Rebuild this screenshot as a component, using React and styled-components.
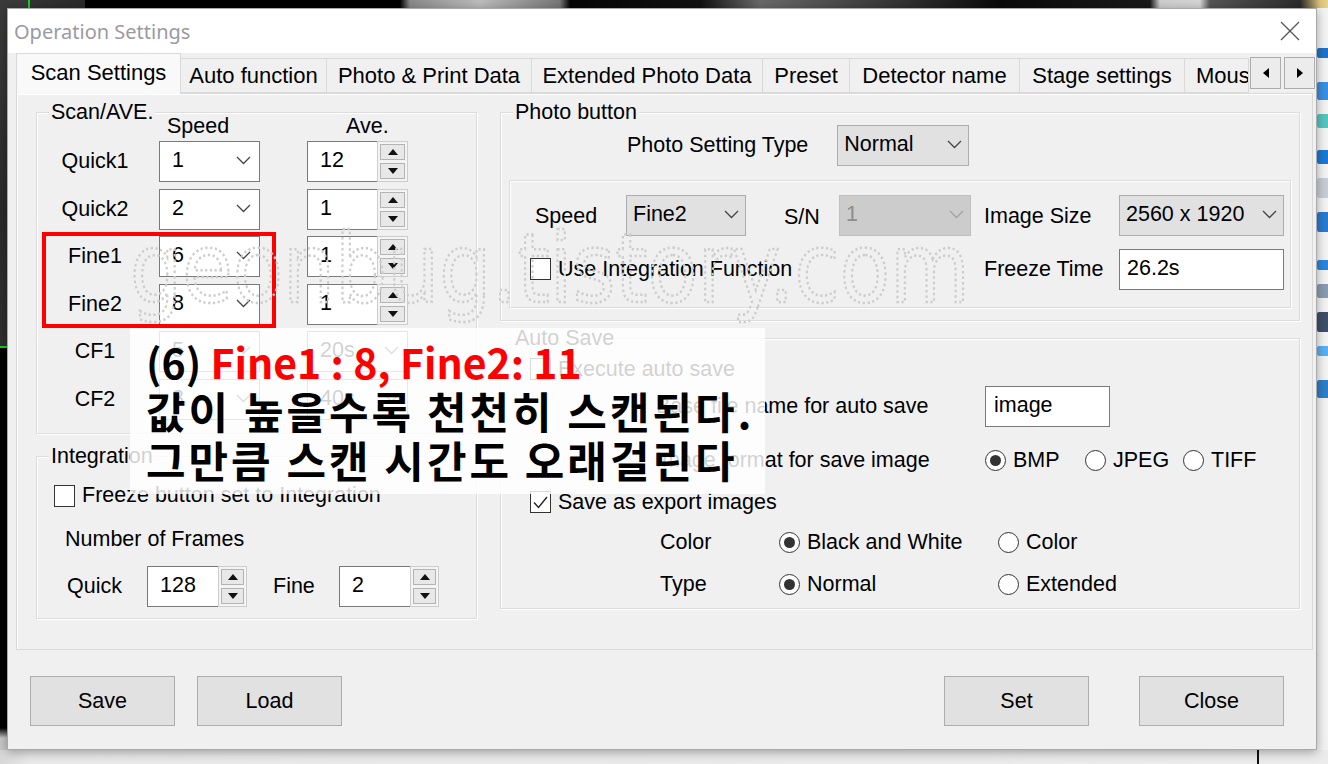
import React from "react";
import styled, { createGlobalStyle } from "styled-components";

const GlobalStyle = createGlobalStyle`
  html, body {
    margin: 0;
    padding: 0;
  }
  body {
    width: 1328px;
    height: 764px;
    overflow: hidden;
    font-family: "Liberation Sans", Arial, sans-serif;
  }
`;

const Desktop = styled.div`
  position: relative;
  width: 1328px;
  height: 764px;
  display: grid;
  grid-template-columns: 7px 1310px 1fr;
  grid-template-rows: 8px 742px 1fr;
  background: #141414;
  overflow: hidden;
`;

const TopStrip = styled.div`
  grid-column: 1 / -1;
  grid-row: 1;
  background: linear-gradient(
    to right,
    #3a3a3a 0, #3a3a3a 28px, #19d219 28px, #19d219 30px, #333 30px, #2a2a2a 85px,
    #000 85px, #000 400px, #8a8a8a 410px, #bdbdbd 480px, #777 560px,
    #050505 570px, #111 700px, #6a6a6a 760px, #333 900px, #0a0a0a 1000px,
    #1a1a1a 1150px, #cfcfcf 1160px, #d6d6d6 1200px, #555 1210px, #2b2b2b 1300px,
    #d9c27a 1320px, #e8d38a 1328px
  );
`;

const LeftStrip = styled.div`
  grid-column: 1;
  grid-row: 2;
  background: linear-gradient(
    to bottom,
    #3b3b3b 0, #2a2a2a 200px, #303030 338px, #19d219 338px, #19d219 340px,
    #000 340px, #000 720px, #c8c8c8 730px
  );
`;

const RightStrip = styled.div`
  grid-column: 3;
  grid-row: 2;
  background: #f4f4f4;
  display: flex;
  flex-direction: column;
  gap: 14px;
  padding-top: 40px;
  overflow: hidden;
`;

const BottomStrip = styled.div`
  grid-column: 1 / -1;
  grid-row: 3;
  background: linear-gradient(to right, #d8d8d8 0, #e9e9e9 30px, #ececec 1257px, #111 1257px, #111 1259px, #ececec 1259px);
`;

const Dialog = styled.div`
  grid-column: 2;
  grid-row: 2;
  position: relative;
  z-index: 1;
  display: flex;
  flex-direction: column;
  background: #f0f0f0;
  border: 1px solid #a9a9a9;
  box-shadow: 0 2px 10px rgba(0, 0, 0, 0.35);
`;

const TitleBar = styled.div`
  height: 44px;
  flex: none;
  background: #fff;
  display: flex;
  align-items: center;
  justify-content: space-between;
  padding: 0 16px 0 6px;
`;

const Title = styled.div`
  font-family: "Noto Sans", "Open Sans", sans-serif;
  font-size: 20px;
  color: #9a9a9f;
`;

const TabsRow = styled.div`
  height: 40px;
  flex: none;
  display: flex;
  align-items: flex-end;
  padding: 0 3px 0 9px;
`;

const Tab = styled.div`
  box-sizing: border-box;
  flex: none;
  width: ${(p) => p.$w}px;
  height: ${(p) => (p.$active ? 41 : 35)}px;
  margin-bottom: ${(p) => (p.$active ? -1 : 0)}px;
  margin-left: -1px;
  border: 1px solid #d9d9d9;
  border-bottom: ${(p) => (p.$active ? "none" : "1px solid #d9d9d9")};
  background: ${(p) => (p.$active ? "#f9f9f9" : "#f0f0f0")};
  display: flex;
  align-items: center;
  justify-content: ${(p) => (p.$clip ? "flex-start" : "center")};
  padding: ${(p) => (p.$clip ? "0 0 0 11px" : "0")};
  padding-bottom: ${(p) => (p.$active ? 3 : 0)}px;
  font-size: 22px;
  color: #000;
  white-space: nowrap;
  overflow: hidden;
  position: relative;
  z-index: ${(p) => (p.$active ? 2 : 1)};
`;

const TabScroll = styled.div`
  display: flex;
  gap: 3px;
  margin-bottom: 4px;
  margin-left: 1px;
`;

const ScrollBtn = styled.div`
  box-sizing: border-box;
  width: 31px;
  height: 32px;
  border: 1px solid #adadad;
  background: #ececec;
  display: flex;
  align-items: center;
  justify-content: center;
`;

const TabPage = styled.div`
  box-sizing: border-box;
  height: 557px;
  flex: none;
  margin: 0 3px 0 8px;
  border: 1px solid #d9d9d9;
  box-shadow: inset 1px 1px 0 #fff;
  background: #f0f0f0;
  display: grid;
  grid-template-columns: 441px 800px;
  column-gap: 23px;
  align-content: start;
  padding: 18px 0 0 19px;
`;

const Column = styled.div`
  display: flex;
  flex-direction: column;
  gap: ${(p) => p.$gap}px;
`;

const Group = styled.div`
  box-sizing: border-box;
  position: relative;
  height: ${(p) => p.$h}px;
  border: 1px solid #dcdcdc;
  box-shadow: inset 1px 1px 0 #fff, 1px 1px 0 #fff;
  padding: ${(p) => p.$pad};
  font-size: 21.5px;
  color: #000;
`;

const Legend = styled.div`
  position: absolute;
  top: -13px;
  left: 12px;
  padding: 0 2px;
  line-height: 24px;
  font-size: 21.5px;
  background: #f0f0f0;
`;

/* ---- scan / ave grid ---- */
const ScanGrid = styled.div`
  display: grid;
  grid-template-columns: 99px 148px 101px;
  grid-template-rows: 20px;
  grid-auto-rows: 40px;
  row-gap: 7.5px;
  align-items: center;
`;

const ColHead = styled.div`
  height: 20px;
  line-height: 24px;
  padding-left: ${(p) => p.$indent}px;
  white-space: nowrap;
`;

const RowLabel = styled.div`
  width: 70px;
  text-align: center;
  white-space: nowrap;
`;

/* ---- combo ---- */
const comboColors = {
  white: { bg: "#fff", border: "#7a7a7a", text: "#000", chev: "#444" },
  flat: { bg: "#e1e1e1", border: "#adadad", text: "#000", chev: "#444" },
  disabled: { bg: "#cccccc", border: "#bfbfbf", text: "#8d8d8d", chev: "#a3a3a3" },
};

const ComboBox = styled.div`
  box-sizing: border-box;
  width: ${(p) => p.$w}px;
  height: ${(p) => p.$h}px;
  display: flex;
  align-items: center;
  justify-content: space-between;
  padding: 0 ${(p) => p.$padR}px 2px ${(p) => p.$padL}px;
  background: ${(p) => comboColors[p.$kind].bg};
  border: 1px solid ${(p) => comboColors[p.$kind].border};
  color: ${(p) => comboColors[p.$kind].text};
  font-size: 21.5px;
  white-space: nowrap;
`;

const Combo = ({ value, w = 101, h = 41, kind = "white", padL, padR }) => (
  <ComboBox
    $w={w}
    $h={h}
    $kind={kind}
    $padL={padL ?? (kind === "white" ? 12 : 6)}
    $padR={padR ?? (kind === "white" ? 8 : 6)}
  >
    <span>{value}</span>
    <svg width="15" height="9" viewBox="0 0 15 9">
      <polyline
        points="1,1 7.5,7.5 14,1"
        fill="none"
        stroke={comboColors[kind].chev}
        strokeWidth="1.3"
      />
    </svg>
  </ComboBox>
);

/* ---- spin ---- */
const SpinBox = styled.div`
  display: flex;
  height: 41px;
`;

const SpinField = styled.div`
  box-sizing: border-box;
  width: ${(p) => p.$w}px;
  height: 41px;
  background: #fff;
  border: 1px solid #7a7a7a;
  border-right: none;
  display: flex;
  align-items: center;
  padding: 0 0 2px ${(p) => p.$padL}px;
  font-size: 21.5px;
`;

const SpinButtons = styled.div`
  box-sizing: border-box;
  width: ${(p) => p.$w}px;
  height: 41px;
  border: 1px solid #cdcdcd;
  background: #f4f4f4;
  padding: 2px;
  display: flex;
  flex-direction: column;
  gap: 3px;
`;

const SpinBtn = styled.div`
  flex: 1;
  border: 1px solid #b4b4b4;
  background: #e8e8e8;
  display: flex;
  align-items: center;
  justify-content: center;
`;

const Tri = styled.div`
  width: 0;
  height: 0;
  border-left: 5px solid transparent;
  border-right: 5px solid transparent;
  ${(p) => (p.$up ? "border-bottom: 6px solid #111;" : "border-top: 6px solid #111;")}
`;

const Spin = ({ value, w = 70, bw = 31, padL = 12 }) => (
  <SpinBox>
    <SpinField $w={w} $padL={padL}>{value}</SpinField>
    <SpinButtons $w={bw}>
      <SpinBtn><Tri $up /></SpinBtn>
      <SpinBtn><Tri /></SpinBtn>
    </SpinButtons>
  </SpinBox>
);

/* ---- checkbox / radio ---- */
const Check = styled.div`
  display: flex;
  align-items: center;
  gap: 7px;
  margin-left: ${(p) => p.$ml || 0}px;
  white-space: nowrap;
`;

const CheckBoxSq = styled.div`
  box-sizing: border-box;
  width: 21px;
  height: 22px;
  flex: none;
  border: 1px solid #333;
  background: #fff;
  display: flex;
  align-items: center;
  justify-content: center;
`;

const CheckItem = ({ label, checked, ml }) => (
  <Check $ml={ml}>
    <CheckBoxSq>
      {checked && (
        <svg width="17" height="15" viewBox="0 0 17 15">
          <polyline points="2,7.5 6.5,12.5 15,2" fill="none" stroke="#222" strokeWidth="1.4" />
        </svg>
      )}
    </CheckBoxSq>
    <span>{label}</span>
  </Check>
);

const RadioWrap = styled.div`
  display: flex;
  align-items: center;
  gap: 7px;
  width: ${(p) => (p.$w ? `${p.$w}px` : "auto")};
  flex: none;
  white-space: nowrap;
`;

const RadioDot = styled.div`
  box-sizing: border-box;
  width: 21px;
  height: 21px;
  flex: none;
  border-radius: 50%;
  border: 1px solid #333;
  background: #fff;
  display: flex;
  align-items: center;
  justify-content: center;
  &::after {
    content: "";
    width: 11px;
    height: 11px;
    border-radius: 50%;
    background: ${(p) => (p.$on ? "#333" : "transparent")};
  }
`;

const Radio = ({ label, on, w }) => (
  <RadioWrap $w={w}>
    <RadioDot $on={on} />
    <span>{label}</span>
  </RadioWrap>
);

const TextField = styled.div`
  box-sizing: border-box;
  width: ${(p) => p.$w}px;
  height: 41px;
  background: #fff;
  border: 1px solid #7a7a7a;
  display: flex;
  align-items: center;
  padding: 0 0 2px ${(p) => p.$padL || 7}px;
  font-size: 21.5px;
`;

/* ---- integration group ---- */
const FramesTitle = styled.div`
  margin: 20px 0 0 11px;
  line-height: 22px;
`;

const FramesRow = styled.div`
  display: flex;
  align-items: center;
  margin-top: 16px;
  padding-left: 13px;
`;

const FieldLabel = styled.span`
  width: ${(p) => p.$w}px;
  margin-left: ${(p) => p.$ml || 0}px;
  flex: none;
  white-space: nowrap;
`;

/* ---- photo group ---- */
const PhotoTypeRow = styled.div`
  display: flex;
  align-items: center;
  gap: 29px;
  padding-left: 118px;
`;

const InnerPanel = styled.div`
  box-sizing: border-box;
  margin-top: 14px;
  height: 128px;
  border: 1px solid #dcdcdc;
  box-shadow: inset 1px 1px 0 #fff, 1px 1px 0 #fff;
  padding: 14px 0 0 25px;
  display: grid;
  grid-template-columns: 91px 120px 38px 55px 132px 13px 135px 165px;
  grid-template-rows: 41px 40px;
  row-gap: 13px;
  align-items: center;
`;

const Cell = styled.div`
  grid-column: ${(p) => p.$col};
  white-space: nowrap;
  padding-top: ${(p) => p.$pt || 0}px;
`;

/* ---- auto save group ---- */
const SaveRow = styled.div`
  display: flex;
  align-items: center;
  height: ${(p) => p.$h}px;
  margin-top: ${(p) => p.$mt}px;
  padding-left: ${(p) => p.$indent || 0}px;
`;

/* ---- bottom buttons ---- */
const ButtonBar = styled.div`
  flex: 1;
  display: flex;
  align-items: flex-start;
  padding: 26px 32px 0 22px;
`;

const PushButton = styled.div`
  box-sizing: border-box;
  width: 145px;
  height: 50px;
  margin-left: ${(p) => p.$ml || 0}px;
  background: #e1e1e1;
  border: 1px solid #adadad;
  display: flex;
  align-items: center;
  justify-content: center;
  font-size: 21.5px;
  color: #000;
`;

const Spacer = styled.div`
  flex: 1;
`;

/* ---- overlays ---- */
const Highlight = styled.div`
  position: absolute;
  left: 42px;
  top: 232px;
  width: 234px;
  height: 96px;
  box-sizing: border-box;
  border: 4px solid #ff0000;
  z-index: 3;
`;

const Watermark = styled.svg`
  position: absolute;
  left: 124px;
  top: 214px;
  z-index: 3;
  pointer-events: none;
`;

const Note = styled.div`
  position: absolute;
  left: 130px;
  top: 328px;
  width: 635px;
  height: 166px;
  box-sizing: border-box;
  padding: 9px 0 0 16px;
  background: rgba(255, 255, 255, 0.82);
  font-family: "Noto Sans CJK KR", "Noto Sans", sans-serif;
  font-weight: 700;
  line-height: 49px;
  color: #000;
  white-space: nowrap;
  z-index: 4;
`;

const NoteLine = styled.div`
  font-size: ${(p) => p.$size}px;
  letter-spacing: ${(p) => p.$ls || 0}px;
`;

const Red = styled.span`
  color: #ff0000;
`;

const DeskIcon = styled.div`
  width: 14px;
  height: ${(p) => p.$h}px;
  margin-top: ${(p) => p.$mt || 0}px;
  background: ${(p) => p.$c};
  border-radius: 2px;
`;

const scanRows = [
  ["Quick1", "1", "12"],
  ["Quick2", "2", "1"],
  ["Fine1", "6", "1"],
  ["Fine2", "8", "1"],
];

const tabs = [
  ["Scan Settings", 165, true],
  ["Auto function", 147],
  ["Photo & Print Data", 206],
  ["Extended Photo Data", 232],
  ["Preset", 88],
  ["Detector name", 171],
  ["Stage settings", 166],
  ["Mouse", 65, false, true],
];

export default function App() {
  return (
    <>
      <GlobalStyle />
      <Desktop>
        <TopStrip />
        <LeftStrip />
        <Dialog>
          <TitleBar>
            <Title>Operation Settings</Title>
            <svg width="20" height="20" viewBox="0 0 20 20">
              <line x1="1" y1="1" x2="19" y2="19" stroke="#555" strokeWidth="1.3" />
              <line x1="19" y1="1" x2="1" y2="19" stroke="#555" strokeWidth="1.3" />
            </svg>
          </TitleBar>

          <TabsRow>
            {tabs.map(([label, w, active, clip]) => (
              <Tab key={label} $w={w} $active={active} $clip={clip}>
                {label}
              </Tab>
            ))}
            <TabScroll>
              <ScrollBtn>
                <svg width="6" height="10" viewBox="0 0 6 10"><polygon points="6,0 0,5 6,10" fill="#000" /></svg>
              </ScrollBtn>
              <ScrollBtn>
                <svg width="6" height="10" viewBox="0 0 6 10"><polygon points="0,0 6,5 0,10" fill="#000" /></svg>
              </ScrollBtn>
            </TabScroll>
          </TabsRow>

          <TabPage>
            <Column $gap={22}>
              <Group $h={322} $pad="1px 0 0 23px">
                <Legend>Scan/AVE.</Legend>
                <ScanGrid>
                  <div />
                  <ColHead $indent={8}>Speed</ColHead>
                  <ColHead $indent={39}>Ave.</ColHead>
                  {scanRows.map(([label, speed, ave]) => (
                    <React.Fragment key={label}>
                      <RowLabel>{label}</RowLabel>
                      <Combo value={speed} />
                      <Spin value={ave} />
                    </React.Fragment>
                  ))}
                  <RowLabel>CF1</RowLabel>
                  <Combo value="5" />
                  <Combo value="20s" />
                  <RowLabel>CF2</RowLabel>
                  <Combo value="3" />
                  <Combo value="40s" />
                </ScanGrid>
              </Group>

              <Group $h={163} $pad="26px 0 0 17px">
                <Legend>Integration</Legend>
                <CheckItem label="Freeze button set to Integration" />
                <FramesTitle>Number of Frames</FramesTitle>
                <FramesRow>
                  <FieldLabel $w={80}>Quick</FieldLabel>
                  <Spin value="128" w={71} bw={29} />
                  <FieldLabel $w={66} $ml={26}>Fine</FieldLabel>
                  <Spin value="2" w={71} bw={29} />
                </FramesRow>
              </Group>
            </Column>

            <Column $gap={17}>
              <Group $h={209} $pad="12px 8px 0 8px">
                <Legend>Photo button</Legend>
                <PhotoTypeRow>
                  <span>Photo Setting Type</span>
                  <Combo value="Normal" w={132} kind="flat" />
                </PhotoTypeRow>
                <InnerPanel>
                  <Cell $col={1} $pt={2}>Speed</Cell>
                  <Cell $col={2}><Combo value="Fine2" w={120} kind="flat" /></Cell>
                  <Cell $col={4} $pt={4}>S/N</Cell>
                  <Cell $col={5}><Combo value="1" w={132} kind="disabled" /></Cell>
                  <Cell $col={7} $pt={2}>Image Size</Cell>
                  <Cell $col={8}><Combo value="2560 x 1920" w={165} kind="flat" /></Cell>
                  <Cell $col="1 / 6"><CheckItem label="Use Integration Function" ml={-5} /></Cell>
                  <Cell $col={7}>Freeze Time</Cell>
                  <Cell $col={8}><TextField $w={165}>26.2s</TextField></Cell>
                </InnerPanel>
              </Group>

              <Group $h={271} $pad="18px 0 0 29px">
                <Legend>Auto Save</Legend>
                <SaveRow $h={22} $mt={1}>
                  <CheckItem label="Execute auto save" />
                </SaveRow>
                <SaveRow $h={41} $mt={6} $indent={126}>
                  <FieldLabel $w={329}>Base file name for auto save</FieldLabel>
                  <TextField $w={125} $padL={8}>image</TextField>
                </SaveRow>
                <SaveRow $h={40} $mt={13} $indent={126}>
                  <FieldLabel $w={329}>Image format for save image</FieldLabel>
                  <Radio label="BMP" on w={100} />
                  <Radio label="JPEG" w={98} />
                  <Radio label="TIFF" />
                </SaveRow>
                <SaveRow $h={22} $mt={11}>
                  <CheckItem label="Save as export images" checked />
                </SaveRow>
                <SaveRow $h={40} $mt={9} $indent={130}>
                  <FieldLabel $w={119}>Color</FieldLabel>
                  <Radio label="Black and White" on w={219} />
                  <Radio label="Color" />
                </SaveRow>
                <SaveRow $h={40} $mt={2} $indent={130}>
                  <FieldLabel $w={119}>Type</FieldLabel>
                  <Radio label="Normal" on w={219} />
                  <Radio label="Extended" />
                </SaveRow>
              </Group>
            </Column>
          </TabPage>

          <ButtonBar>
            <PushButton>Save</PushButton>
            <PushButton $ml={22}>Load</PushButton>
            <Spacer />
            <PushButton>Set</PushButton>
            <PushButton $ml={50}>Close</PushButton>
          </ButtonBar>
        </Dialog>

        <RightStrip>
          <DeskIcon $h={10} $c="#1e73c8" />
          <DeskIcon $h={18} $c="#3a8ee0" $mt={10} />
          <DeskIcon $h={14} $c="#54c6c0" />
          <DeskIcon $h={14} $c="#1c78d4" $mt={8} />
          <DeskIcon $h={20} $c="#c9ced6" />
          <DeskIcon $h={20} $c="#2a7bd0" />
          <DeskIcon $h={10} $c="#2b86dd" $mt={14} />
          <DeskIcon $h={14} $c="#8b9bb0" />
          <DeskIcon $h={20} $c="#40506a" />
          <DeskIcon $h={10} $c="#5ab0f0" />
          <DeskIcon $h={18} $c="#2f7fc8" $mt={10} />
        </RightStrip>
        <BottomStrip />

        <Highlight />
        <Watermark width="860" height="120" viewBox="0 0 860 120">
          <text
            x="6"
            y="88"
            textLength="840"
            lengthAdjust="spacingAndGlyphs"
            fontFamily="DejaVu Sans, sans-serif"
            fontSize="96"
            fill="none"
            stroke="#cdcdcd"
            strokeWidth="2.5"
            strokeDasharray="2.5 3"
          >
            geonbug.tistory.com
          </text>
        </Watermark>
        <Note>
          <NoteLine $size={41}>
            (6) <Red>Fine1 : 8, Fine2: 11</Red>
          </NoteLine>
          <NoteLine $size={43} $ls={3}>값이 높을수록 천천히 스캔된다.</NoteLine>
          <NoteLine $size={43} $ls={3}>그만큼 스캔 시간도 오래걸린다</NoteLine>
        </Note>
      </Desktop>
    </>
  );
}
